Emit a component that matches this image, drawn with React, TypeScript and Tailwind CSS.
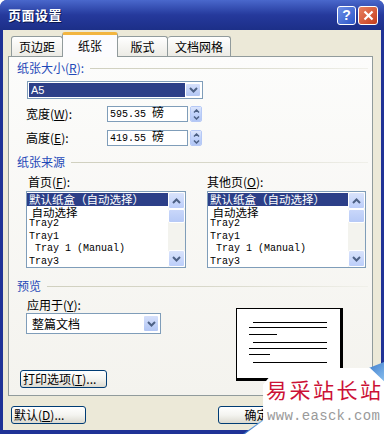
import React from 'react';

const cjk = "font-['Noto_Sans_CJK_SC',sans-serif]";
const mono = "font-['Liberation_Mono','Noto_Sans_CJK_SC',monospace]";

const Chevron: React.FC<{ up?: boolean; w?: number }> = ({ up, w = 9 }) => (
  <svg width={w} height={6} viewBox="0 0 9 6">
    <path d={up ? 'M1 5 L4.5 1.5 L8 5' : 'M1 1 L4.5 4.5 L8 1'} stroke="#4d6185" strokeWidth="2" fill="none" />
  </svg>
);

const DropButton: React.FC = () => (
  <div className="w-[16px] h-full bg-gradient-to-b from-[#d6e0fb] to-[#b2c6f4] border border-white rounded-[2px] flex items-center justify-center">
    <Chevron />
  </div>
);

const Spin: React.FC = () => (
  <div className="w-[12px] h-full flex flex-col border border-[#b6c9f6] rounded-[2px] overflow-hidden">
    <div className="flex-1 bg-gradient-to-b from-[#dce5fc] to-[#c1d3fb] flex items-center justify-center">
      <svg width="7" height="4" viewBox="0 0 7 4"><path d="M1 3.5 L3.5 1 L6 3.5" stroke="#4d6185" strokeWidth="1.5" fill="none" /></svg>
    </div>
    <div className="flex-1 bg-gradient-to-b from-[#c1d3fb] to-[#b2c6f4] flex items-center justify-center">
      <svg width="7" height="4" viewBox="0 0 7 4"><path d="M1 0.5 L3.5 3 L6 0.5" stroke="#4d6185" strokeWidth="1.5" fill="none" /></svg>
    </div>
  </div>
);

const GroupLabel: React.FC<{ children: React.ReactNode; className?: string }> = ({ children, className }) => (
  <div className={`flex items-center h-[14px] pl-[8px] pr-[4px] ${className ?? ''}`}>
    <span className="text-[12px] leading-[14px] text-[#1f49b8]">{children}</span>
    <div className="flex-1 h-px ml-[6px] bg-gradient-to-r from-[#d0d0bf] via-[#d8d8ca] to-[#f0f0ea]" />
  </div>
);

// paper trays, same list in both boxes
const trays = [
  { t: '默认纸盒（自动选择）', sel: true, m: false },
  { t: ' 自动选择', sel: false, m: false },
  { t: 'Tray2', sel: false, m: true },
  { t: 'Tray1', sel: false, m: true },
  { t: ' Tray 1 (Manual)', sel: false, m: true },
  { t: 'Tray3', sel: false, m: true },
];

const ListBox: React.FC<{ width: string }> = ({ width }) => (
  <div className={`${width} h-[77px] border border-[#7f9db9] bg-white flex`}>
    <div className="flex-1 pt-px overflow-hidden">
      {trays.map((r, i) => (
        <div
          key={i}
          className={`h-[12.5px] leading-[12.5px] pl-[2px] whitespace-pre overflow-hidden ${r.m ? `${mono} text-[10px]` : 'text-[11.5px]'} ${r.sel ? 'bg-[#2c3f88] text-white' : 'text-black'}`}
        >
          {r.t}
        </div>
      ))}
    </div>
    <div className="w-[17px] flex flex-col bg-[#f3f3ee]">
      <div className="h-[17px] bg-gradient-to-b from-[#d9e3fb] to-[#bccefa] border border-white rounded-[2px] flex items-center justify-center">
        <Chevron up />
      </div>
      <div className="h-[14px] bg-gradient-to-b from-[#c9d7fa] to-[#b6c9f6] border border-white rounded-[2px]" />
      <div className="flex-1" />
      <div className="h-[17px] bg-gradient-to-b from-[#d9e3fb] to-[#bccefa] border border-white rounded-[2px] flex items-center justify-center">
        <Chevron />
      </div>
    </div>
  </div>
);

const XpButton: React.FC<{ children: React.ReactNode; className?: string }> = ({ children, className }) => (
  <div className={`h-[18px] border border-[#003c74] rounded-[3px] bg-gradient-to-b from-white via-[#f4f4f0] to-[#dcdad0] text-[12px] leading-[16px] flex items-center pl-[2px] ${className ?? ''}`}>
    {children}
  </div>
);

const App: React.FC = () => {
  return (
    <div className={`w-[384px] h-[434px] relative overflow-hidden bg-[#1f3296] rounded-t-[7px] ${cjk} text-black`}>
      {/* Title bar */}
      <div className="h-[30px] flex items-center justify-between pl-[8px] pr-[6px] bg-gradient-to-b from-[#4a68cc] via-[#25399c] to-[#1c2f88]">
        <span className="text-white font-bold text-[13px] tracking-[0.5px] [text-shadow:1px_1px_0_#0a1850]">页面设置</span>
        <div className="flex gap-[2px]">
          <div className="w-[19px] h-[19px] rounded-[3px] border border-white bg-gradient-to-br from-[#6f8fe6] to-[#2c55c8] flex items-center justify-center text-white font-bold text-[14px] leading-none font-['Liberation_Sans',sans-serif]">?</div>
          <div className="w-[20px] h-[19px] rounded-[3px] border border-white bg-gradient-to-br from-[#e9805f] to-[#c43c1a] flex items-center justify-center">
            <svg width="11" height="11" viewBox="0 0 11 11"><path d="M1.5 1.5 L9.5 9.5 M9.5 1.5 L1.5 9.5" stroke="white" strokeWidth="2.2" /></svg>
          </div>
        </div>
      </div>

      {/* Body */}
      <div className="mx-[3px] h-[400px] bg-[#ece9d8]">
        {/* Tabs */}
        <div className="h-[27px] flex items-end pl-[8px] relative z-10">
          <div className="w-[52px] h-[20px] border border-b-0 border-[#919b9c] rounded-t-[3px] bg-gradient-to-b from-white to-[#ecebe5] text-[12px] flex items-center justify-center mb-px">页边距</div>
          <div className="w-[56px] h-[25px] border border-b-0 border-[#919b9c] border-t-[3px] border-t-[#f2b540] rounded-t-[3px] bg-[#fcfcfe] text-[12px] flex items-center justify-center -mx-px">纸张</div>
          <div className="w-[51px] h-[20px] border border-b-0 border-[#919b9c] rounded-t-[3px] bg-gradient-to-b from-white to-[#ecebe5] text-[12px] flex items-center justify-center mb-px">版式</div>
          <div className="w-[63px] h-[20px] border border-b-0 border-l-0 border-[#919b9c] rounded-t-[3px] bg-gradient-to-b from-white to-[#ecebe5] text-[12px] flex items-center justify-center mb-px">文档网格</div>
        </div>

        {/* Panel */}
        <div className="ml-[5px] w-[365px] h-[340px] -mt-px border border-[#919b9c] bg-gradient-to-b from-[#fcfcfb] to-[#f4f3ee]">
          <GroupLabel className="mt-[4px]">纸张大小(<u>R</u>):</GroupLabel>

          <div className="ml-[18px] mt-[6px] w-[176px] h-[18px] border border-[#7f9db9] bg-white flex p-px">
            <div className="flex-1 bg-[#2c3f88] text-white text-[11px] leading-[14px] pl-[2px] font-['Liberation_Sans',sans-serif]">A5</div>
            <DropButton />
          </div>

          <div className="flex items-center ml-[17px] mt-[7px] h-[16px]">
            <span className="w-[81px] text-[12px]">宽度(<u>W</u>):</span>
            <div className={`w-[81px] h-full border border-[#7f9db9] bg-white pl-[2px] text-[10px] leading-[14px] ${mono}`}>595.35 <span className="text-[12px]">磅</span></div>
            <div className="ml-[2px] h-full"><Spin /></div>
          </div>
          <div className="flex items-center ml-[17px] mt-[8px] h-[16px]">
            <span className="w-[81px] text-[12px]">高度(<u>E</u>):</span>
            <div className={`w-[81px] h-full border border-[#7f9db9] bg-white pl-[2px] text-[10px] leading-[14px] ${mono}`}>419.55 <span className="text-[12px]">磅</span></div>
            <div className="ml-[2px] h-full"><Spin /></div>
          </div>

          <GroupLabel className="mt-[9px]">纸张来源</GroupLabel>

          <div className="flex mt-[6px] ml-[17px]">
            <div className="w-[160px]">
              <div className="pl-[2px] h-[14px] text-[12px] leading-[14px]">首页(<u>F</u>):</div>
              <div className="mt-[2px]"><ListBox width="w-[160px]" /></div>
            </div>
            <div className="ml-[21px] w-[159px]">
              <div className="h-[14px] text-[12px] leading-[14px]">其他页(<u>O</u>):</div>
              <div className="mt-[2px]"><ListBox width="w-[159px]" /></div>
            </div>
          </div>

          <GroupLabel className="mt-[11px]">预览</GroupLabel>

          <div className="flex">
            <div className="pl-[11px] w-[227px]">
              <div className="pl-[7px] mt-[5px] h-[14px] text-[12px] leading-[14px]">应用于(<u>Y</u>):</div>
              <div className="ml-[6px] mt-px w-[135px] h-[21px] border border-[#7f9db9] bg-white flex items-stretch p-px">
                <span className="flex-1 text-[12px] leading-[17px] pl-[4px]">整篇文档</span>
                <DropButton />
              </div>
              <XpButton className="w-[87px] mt-[36px]">打印选项(<u>T</u>)...</XpButton>
            </div>
            <div className="mt-[15px]">
              <div className="w-[107px] h-[73px] bg-white border border-black border-r-[3px] border-b-[3px] pt-[13px] pl-[12px]">
                <svg width="80" height="45" viewBox="0 0 80 45">
                  <g stroke="#000" strokeWidth="1">
                    <line x1="4" y1="0.5" x2="78" y2="0.5" />
                    <line x1="0" y1="5.5" x2="78" y2="5.5" />
                    <line x1="0" y1="12.5" x2="28" y2="12.5" />
                    <line x1="4" y1="20.5" x2="78" y2="20.5" />
                    <line x1="0" y1="26.5" x2="78" y2="26.5" />
                    <line x1="0" y1="32.5" x2="21" y2="32.5" />
                    <line x1="4" y1="40.5" x2="78" y2="40.5" />
                  </g>
                </svg>
              </div>
            </div>
          </div>
        </div>

        {/* Bottom buttons */}
        <div className="flex mt-[10px] pl-[8px]">
          <XpButton className="w-[75px]">默认(<u>D</u>)...</XpButton>
          <XpButton className="w-[75px] ml-[132px] justify-center">确定</XpButton>
          <XpButton className="w-[75px] ml-[6px] justify-center">取消</XpButton>
        </div>
      </div>

      {/* Watermark overlay */}
      <div className="absolute left-[362px] top-[362px] w-[22px] h-[22px] bg-gradient-to-br from-[#2f6fc4] to-[#8ec3f0] [clip-path:polygon(0_40%,100%_0,100%_100%)]" />
      <div className="absolute left-[243px] top-[418px] w-[22px] h-[16px] bg-gradient-to-tr from-[#2f6fc4] to-[#8ec3f0] [clip-path:polygon(0_100%,100%_0,100%_100%)]" />
      <div className="absolute left-[245px] top-[368px] w-[139px] h-[66px] bg-white [clip-path:polygon(23%_0,90%_0,100%_20%,100%_100%,0_100%,13%_80%,13%_25%)]" />
      <div className="absolute left-[266px] top-[376px] text-[21px] leading-[26px] tracking-[2.5px] text-[#cc1136] whitespace-nowrap">易采站长站</div>
      <div className="absolute left-[267px] top-[408px] text-[14px] leading-[16px] text-[#9a9a9a] whitespace-nowrap font-['Liberation_Mono',monospace] tracking-[0.3px]">www.easck.com</div>
    </div>
  );
};

export default App;
